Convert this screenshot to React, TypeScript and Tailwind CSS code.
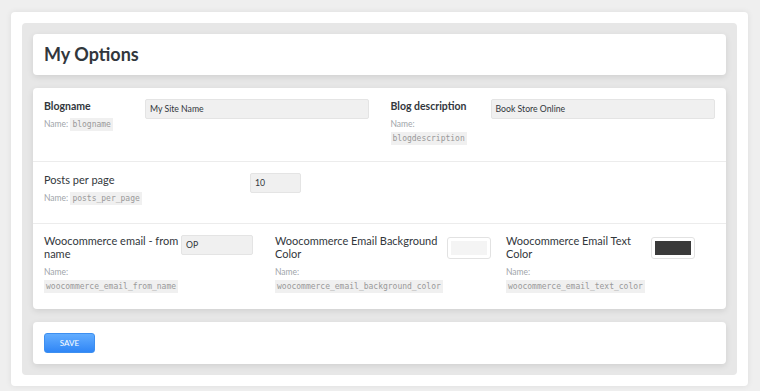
const font = { fontFamily: 'Lato, "Open Sans", sans-serif' };

function FieldName({ name, wrap, gap = 'mt-[4px]' }: { name: string; wrap?: boolean; gap?: string }) {
  return (
    <div className={`${gap} text-[8.5px] leading-[14px] text-[#a0a5aa]`}>
      Name:{wrap ? <br /> : ' '}
      <code className="bg-[#f0f0f0] px-[2px] py-[2px] font-['DejaVu_Sans_Mono',monospace] text-[8px] text-[#999]">
        {name}
      </code>
    </div>
  );
}

function TextInput({ value, width }: { value: string; width: string }) {
  return (
    <div
      className={`${width} flex h-[20px] shrink-0 items-center rounded-[2px] border border-[#e4e4e4] bg-[#f0f0f0] px-[4px] text-[8.7px] text-[#32373c]`}
    >
      {value}
    </div>
  );
}

function Swatch({ color }: { color: string }) {
  return (
    <div className="h-[22px] w-[44px] shrink-0 rounded-[3px] border border-[#e2e2e2] bg-white p-[3px]">
      <div className={`h-full w-full ${color}`} />
    </div>
  );
}

export default function App() {
  return (
    <div className="min-h-[391px] w-[760px] bg-[#efefef] pl-[11px] pt-[12px]" style={font}>
      <div className="w-[737px] rounded-[4px] bg-white p-[11px] shadow-[0_0_6px_rgba(0,0,0,0.08)]">
        <div className="flex flex-col gap-[13px] rounded-[4px] bg-[#e7e7e7] p-[11px]">
          <div className="flex h-[41px] items-center rounded-[4px] bg-white px-[11px] shadow-[0_2px_6px_rgba(0,0,0,0.1)]">
            <h1 className="text-[18px] font-bold text-[#32373c]">My Options</h1>
          </div>

          <div className="rounded-[4px] bg-white shadow-[0_2px_6px_rgba(0,0,0,0.1)]">
            <div className="grid h-[74px] grid-cols-2 gap-[22px] border-b border-[#ececec] px-[11px] pt-[11px]">
              <div className="flex">
                <div className="w-[101px] shrink-0">
                  <div className="text-[10.5px] font-bold leading-[14px] text-[#32373c]">Blogname</div>
                  <FieldName name="blogname" />
                </div>
                <TextInput value="My Site Name" width="flex-1" />
              </div>
              <div className="flex">
                <div className="w-[100px] shrink-0">
                  <div className="text-[10.5px] font-bold leading-[14px] text-[#32373c]">Blog description</div>
                  <FieldName name="blogdescription" wrap />
                </div>
                <TextInput value="Book Store Online" width="flex-1" />
              </div>
            </div>

            <div className="flex h-[62px] border-b border-[#ececec] px-[11px] pt-[11px]">
              <div className="w-[206px] shrink-0">
                <div className="text-[11px] leading-[14px] text-[#32373c]">Posts per page</div>
                <FieldName name="posts_per_page" />
              </div>
              <TextInput value="10" width="w-[51px]" />
            </div>

            <div className="grid h-[85px] grid-cols-3 gap-[22px] px-[11px] pt-[11px]">
              <div className="flex">
                <div className="w-[137px] shrink-0">
                  <div className="text-[11px] leading-[12.5px] text-[#32373c]">Woocommerce email - from name</div>
                  <FieldName name="woocommerce_email_from_name" wrap gap="mt-[5px]" />
                </div>
                <TextInput value="OP" width="w-[72px]" />
              </div>
              <div className="flex">
                <div className="w-[172px] shrink-0">
                  <div className="text-[11px] leading-[12.5px] text-[#32373c]">Woocommerce Email Background Color</div>
                  <FieldName name="woocommerce_email_background_color" wrap gap="mt-[5px]" />
                </div>
                <div className="pt-[2px]">
                  <Swatch color="bg-[#f4f4f4]" />
                </div>
              </div>
              <div className="flex">
                <div className="w-[145px] shrink-0">
                  <div className="text-[11px] leading-[12.5px] text-[#32373c]">Woocommerce Email Text Color</div>
                  <FieldName name="woocommerce_email_text_color" wrap gap="mt-[5px]" />
                </div>
                <div className="pt-[2px]">
                  <Swatch color="bg-[#3a3a3a]" />
                </div>
              </div>
            </div>
          </div>

          <div className="flex h-[42px] items-center rounded-[4px] bg-white px-[11px] shadow-[0_2px_6px_rgba(0,0,0,0.1)]">
            <button className="h-[20px] w-[51px] rounded-[3px] border border-[#3d8ff0] bg-gradient-to-b from-[#62adff] to-[#2f86f6] text-[8px] text-white">
              SAVE
            </button>
          </div>
        </div>
      </div>
    </div>
  );
}
